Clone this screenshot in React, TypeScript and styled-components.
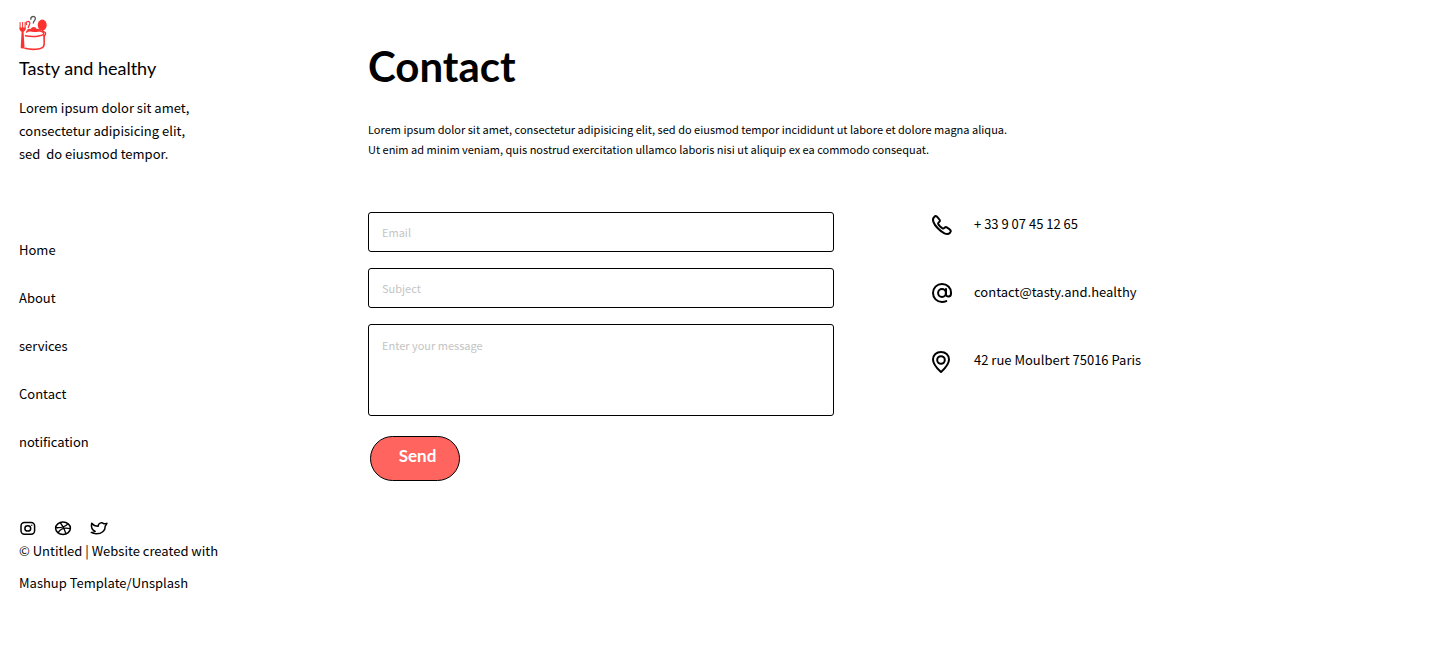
import React from "react";
import styled, { createGlobalStyle } from "styled-components";

const GlobalStyle = createGlobalStyle`
  *, *::before, *::after { box-sizing: border-box; }
  body {
    margin: 0;
    background: #fff;
    color: #000;
    font-family: "Noto Sans CJK SC", "Noto Sans", sans-serif;
    font-size: 13px;
    line-height: 24px;
  }
  p, h1, h2, ul { margin: 0; padding: 0; }
`;

const Page = styled.div`
  display: flex;
  align-items: flex-start;
`;

const Sidebar = styled.aside`
  flex: 0 0 348px;
  padding: 15px 19px;
`;

const Logo = styled.svg`
  display: block;
  width: 28px;
  height: 36px;
`;

const Brand = styled.h2`
  margin-top: 5px;
  font-family: Lato, "Liberation Sans", sans-serif;
  font-size: 18px;
  font-weight: 400;
  line-height: 24px;
`;

const Tagline = styled.p`
  margin-top: 16px;
  line-height: 23px;
  white-space: pre-line;
`;

const NavList = styled.ul`
  margin-top: 73px;
  display: grid;
  gap: 24px;
  list-style: none;
`;

const NavLink = styled.a`
  color: inherit;
  text-decoration: none;
`;

const Socials = styled.div`
  display: flex;
  gap: 17px;
  margin-top: 66px;
`;

const SocialLink = styled.a`
  display: flex;
  color: inherit;
`;

const SocialIcon = styled.svg`
  width: 18px;
  height: 15px;
  overflow: visible;
  fill: none;
  stroke: currentColor;
  stroke-width: 1.5;
  stroke-linejoin: round;
`;

const Credits = styled.p`
  line-height: 32px;
`;

const Main = styled.main`
  flex: 1;
  min-width: 0;
  padding: 39px 20px;
`;

const Title = styled.h1`
  font-family: Lato, "Liberation Sans", sans-serif;
  font-size: 42px;
  font-weight: 700;
  line-height: 54px;
`;

const Intro = styled.p`
  margin-top: 26px;
  font-size: 11px;
  line-height: 20px;
`;

const Columns = styled.div`
  display: grid;
  grid-template-columns: minmax(0, 466px) auto;
  justify-content: start;
  gap: 96px;
  margin-top: 53px;
`;

const Form = styled.form`
  display: grid;
  gap: 16px;
`;

const Field = styled.input`
  width: 100%;
  height: 40px;
  padding: 0 13px 1px;
  border: 1px solid #000;
  border-radius: 3px;
  background: #fff;
  font: inherit;
  font-size: 11px;

  &::placeholder { color: #c4c4c4; opacity: 1; }
`;

const Message = styled(Field)`
  display: block;
  height: 92px;
  padding-top: 8px;
  resize: none;
`;

const SendButton = styled.button`
  width: 90px;
  height: 45px;
  margin: 4px 2px;
  padding: 0 0 6px 5px;
  border: 1px solid #000;
  border-radius: 23px;
  background: #ff645f;
  color: #fff;
  font-family: Lato, "Liberation Sans", sans-serif;
  font-size: 17px;
  font-weight: 700;
`;

const ContactList = styled.ul`
  display: grid;
  align-content: start;
  gap: 44px;
  list-style: none;
`;

const ContactItem = styled.li`
  display: grid;
  grid-template-columns: 24px auto;
  align-items: center;
  gap: 20px;
`;

const ContactIcon = styled.svg`
  width: 24px;
  height: 24px;
  overflow: visible;
  fill: none;
  stroke: currentColor;
  stroke-width: 2;
  stroke-linecap: round;
  stroke-linejoin: round;
`;

const nav = ["Home", "About", "services", "Contact", "notification"];

export default function App() {
  return (
    <>
      <GlobalStyle />
      <Page>
        <Sidebar>
          <Logo viewBox="0 0 28 36" aria-hidden="true">
            <g fill="none" stroke="#fb3330" strokeLinecap="round">
              <path d="M1.1 7.5v6.5M3.6 7.5v7M6.1 7.5v6.5" strokeWidth="1" />
              <path d="M23.500 15c0 2 3.200 1.500 3.200 3.500s-1.500 2-2.200 2.500" strokeWidth="1.300" />
              <path d="M7.500 17c2-1.800 14-2.200 17 .6 2.500 3-9 5-18 3.200" strokeWidth="1.500" />
              <path d="M25.400 20.500c-1 4 .8 8.500-.9 11-2.500 3.400-12.500 3.400-18.500 1.800" strokeWidth="1.600" />
              <path d="M7.500 9.500C6 7.500 9 5.300 10.500 7s-1 3.200-1.200 5.500" strokeWidth="1.300" />
            </g>
            <g fill="#fb3330">
              <path d="M.6 12.500h6c.3 2.500-.8 3.700-2 4.300l.9 15.400c.1 1.800-3.900 1.800-3.800 0l.9-15.400C1.200 16 .4 15 .6 12.500z" />
              <ellipse cx="23.200" cy="10.100" rx="4.500" ry="5.600" />
              <path d="M7.500 15.800c.5-2 3-2.600 4.500-1.800 0-2.700 5.500-2.700 5.500 0 1.800-.7 4 .2 4.300 1.800-3 .1-3 1.500-6.800 1.300-3-.2-4-1.600-7.500-1.300z" />
            </g>
            <path d="M12 4.800C11 1.500 15.500.3 16.300 3c.7 2.500-2.300 2.700-2 5.500" fill="none" stroke="#555" strokeWidth="1.300" />
          </Logo>
          <Brand>Tasty and healthy</Brand>
          <Tagline>{"Lorem ipsum dolor sit amet,\nconsectetur adipisicing elit,\nsed \u00a0do eiusmod tempor."}</Tagline>
          <nav>
            <NavList>
              {nav.map((n) => (
                <li key={n}><NavLink href="#">{n}</NavLink></li>
              ))}
            </NavList>
          </nav>
          <Socials>
            <SocialLink href="#" aria-label="Instagram">
              <SocialIcon viewBox="0 0 18 15">
                <rect x="2" y="2.600" width="13.600" height="11.600" rx="3.400" />
                <ellipse cx="8.800" cy="8.400" rx="2.900" ry="2.600" />
                <circle cx="12.800" cy="5.200" r=".7" fill="currentColor" stroke="none" />
              </SocialIcon>
            </SocialLink>
            <SocialLink href="#" aria-label="Dribbble">
              <SocialIcon viewBox="0 0 18 15">
                <ellipse cx="9" cy="8.300" rx="7.400" ry="6.200" />
                <path d="M6.300 2.700c2.700 3 4.600 7 5.600 11M1.700 7.700c5 .2 9.600-.8 12.200-3.800M4 12.800c2.500-4.200 7-5.500 12.300-4.100" strokeWidth="1.300" />
              </SocialIcon>
            </SocialLink>
            <SocialLink href="#" aria-label="Twitter">
              <SocialIcon viewBox="0 0 18 15">
                <path d="M2.700 3.200c1.600 2 4 3 6.500 3 -.3-3 3.500-4.400 5.500-2.500 1 .2 2-.1 3.200-.4-.4 1.400-1 2-1.700 2.900.2 4.700-3.700 7.600-8.700 7.600-2 0-4-.4-5.200-1.300 1.600 0 3-.3 3.900-1C3 10 2 6.500 2.700 3.200z" />
              </SocialIcon>
            </SocialLink>
          </Socials>
          <Credits>© Untitled | Website created with<br />Mashup Template/Unsplash</Credits>
        </Sidebar>
        <Main>
          <Title>Contact</Title>
          <Intro>
            Lorem ipsum dolor sit amet, consectetur adipisicing elit, sed do eiusmod tempor incididunt ut labore et dolore magna aliqua.
            <br />
            Ut enim ad minim veniam, quis nostrud exercitation ullamco laboris nisi ut aliquip ex ea commodo consequat.
          </Intro>
          <Columns>
            <Form onSubmit={(e) => e.preventDefault()}>
              <Field type="email" placeholder="Email" aria-label="Email" />
              <Field type="text" placeholder="Subject" aria-label="Subject" />
              <Message as="textarea" placeholder="Enter your message" aria-label="Message" />
              <SendButton type="submit">Send</SendButton>
            </Form>
            <ContactList>
              <ContactItem>
                <ContactIcon viewBox="0 0 24 24" aria-hidden="true">
                  <path d="M9.900 8.300C9 7 7.800 5.300 6.800 4.500 5.800 3.800 4.900 4.200 4.200 4.900 2.800 6.100 2.700 7.800 3.400 9.800c1.400 4 6.600 9.500 11 11.500 2 .9 4 1.100 5.400-.3.700-.7 1.500-1.600.8-2.600-.8-1.200-2.600-2.300-3.900-3.100-1-.6-1.700.1-2.500.8-.7.7-1.300.6-2 .1-1.500-1-2.900-2.400-3.800-3.800-.5-.8-.5-1.400.2-2 .7-.7 1.900-1.200 1.300-2.100z" />
                </ContactIcon>
                <span>+ 33 9 07 45 12 65</span>
              </ContactItem>
              <ContactItem>
                <ContactIcon viewBox="0 0 24 24" aria-hidden="true">
                  <circle cx="12" cy="13" r="3.900" />
                  <path d="M16 9v5.200c0 3.300 5 3.200 5-.8v-.8C21 7.700 17.300 4 12 4s-9 3.900-9 9 3.900 9 9 9c1.600 0 3-.3 4.300-.9" />
                </ContactIcon>
                <span>contact@tasty.and.healthy</span>
              </ContactItem>
              <ContactItem>
                <ContactIcon viewBox="0 0 24 24" aria-hidden="true">
                  <path d="M11 24c-2-1.900-8-7-8-12.500C3 7 6.500 4 11 4s8 3 8 7.500C19 17 13 22.100 11 24z" />
                  <circle cx="11" cy="12" r="3.800" />
                </ContactIcon>
                <span>42 rue Moulbert 75016 Paris</span>
              </ContactItem>
            </ContactList>
          </Columns>
        </Main>
      </Page>
    </>
  );
}
